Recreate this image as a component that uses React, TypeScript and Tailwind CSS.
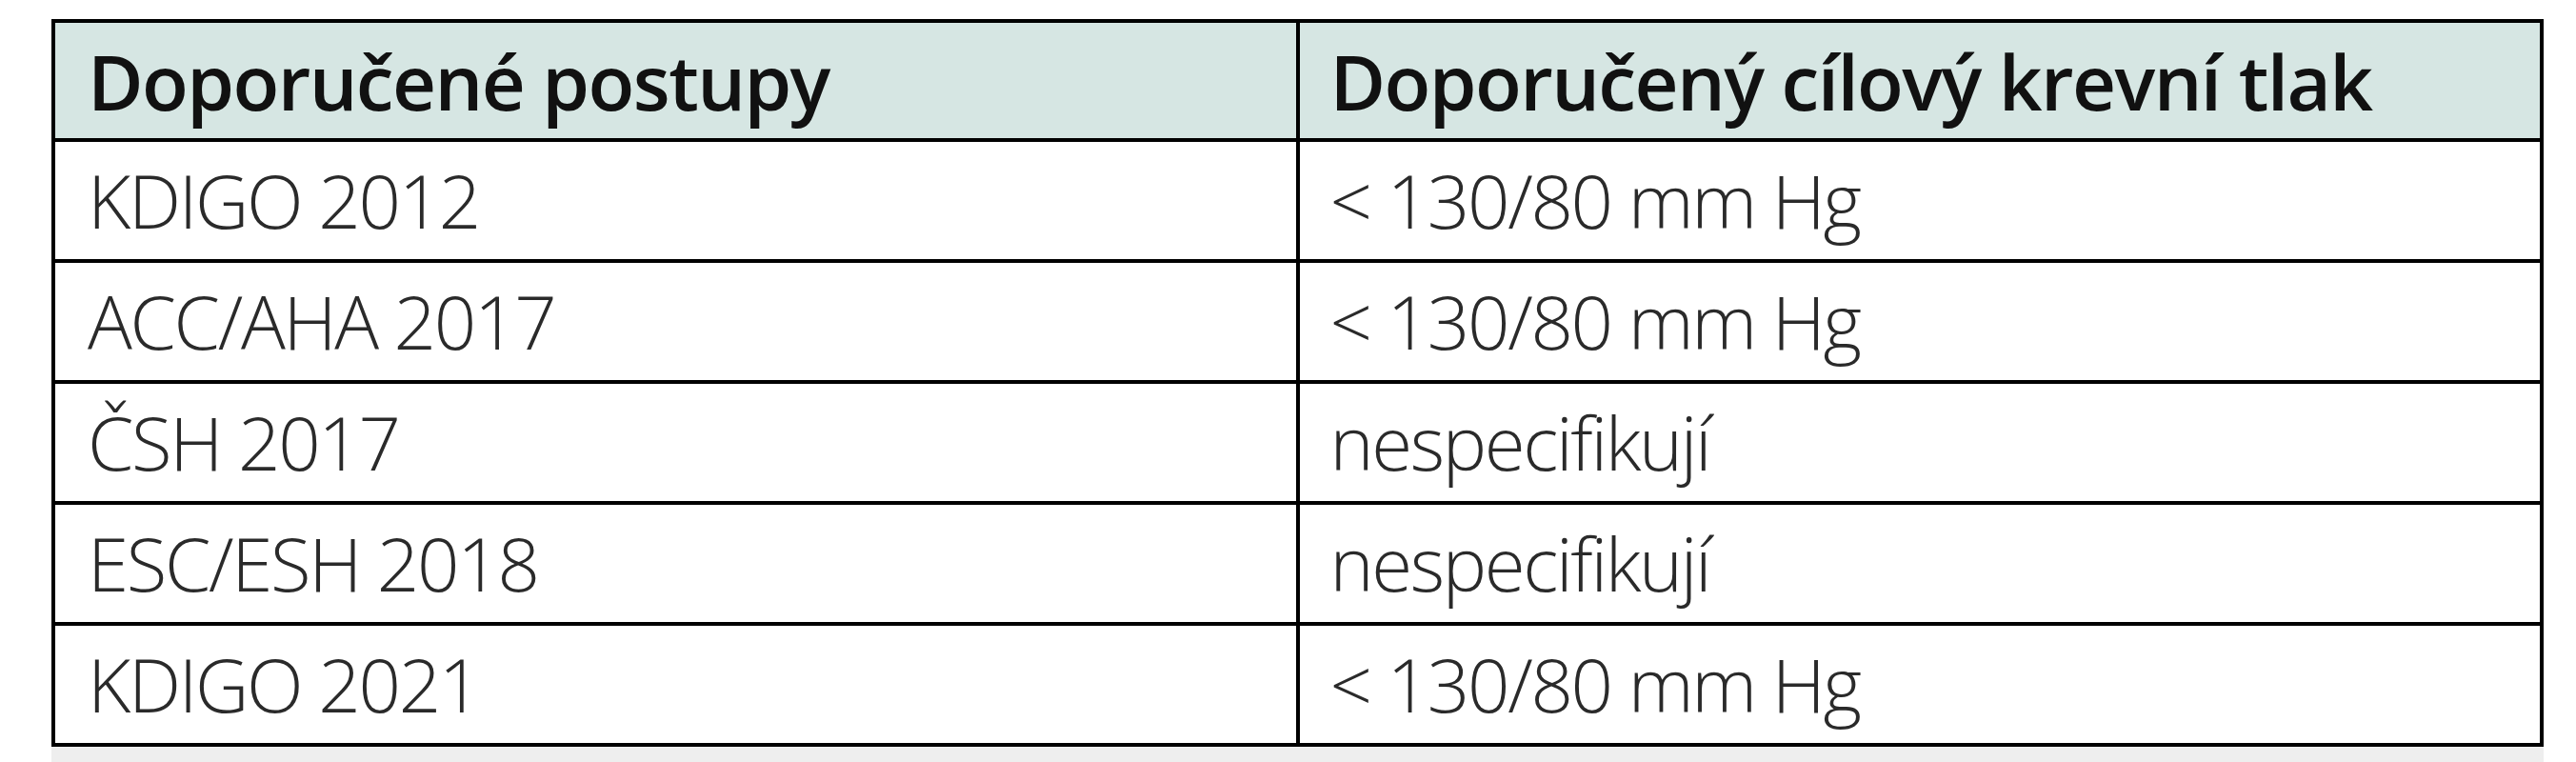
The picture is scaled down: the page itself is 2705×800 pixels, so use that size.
import React from 'react';

const rows: [string, string][] = [
  ['KDIGO 2012', '< 130/80 mm Hg'],
  ['ACC/AHA 2017', '< 130/80 mm Hg'],
  ['ČSH 2017', 'nespecifikují'],
  ['ESC/ESH 2018', 'nespecifikují'],
  ['KDIGO 2021', '< 130/80 mm Hg'],
];

const App: React.FC = () => {
  return (
    <div
      className="w-[2705px] h-[800px] bg-white pt-[20px] pl-[54px] flex flex-col"
      style={{ fontFamily: '"Open Sans", "Noto Sans", sans-serif' }}
    >
      <table className="w-[2617px] border-collapse border-[4px] border-black table-fixed">
        <thead>
          <tr className="bg-[#d6e6e3] h-[125px]">
            <th className="w-1/2 border-[4px] border-black pl-[34px] text-left align-middle font-semibold text-[80px] tracking-[-0.02em] text-[#111]">
              Doporučené postupy
            </th>
            <th className="w-1/2 border-[4px] border-black pl-[32px] text-left align-middle font-semibold text-[80px] tracking-[-0.02em] text-[#111]">
              Doporučený cílový krevní tlak
            </th>
          </tr>
        </thead>
        <tbody>
          {rows.map(([guide, target]) => (
            <tr key={guide} className="h-[127px]">
              <td className="border-[4px] border-black pl-[34px] align-middle font-light text-[78px] [font-stretch:95%] tracking-[-0.03em] text-[#2a2a2a]">
                {guide}
              </td>
              <td className="border-[4px] border-black pl-[32px] align-middle font-light text-[78px] [font-stretch:95%] tracking-[-0.03em] text-[#2a2a2a]">
                {target}
              </td>
            </tr>
          ))}
        </tbody>
      </table>
      <div className="w-[2617px] flex-1 bg-[#eeeeee]" />
    </div>
  );
};

export default App;
